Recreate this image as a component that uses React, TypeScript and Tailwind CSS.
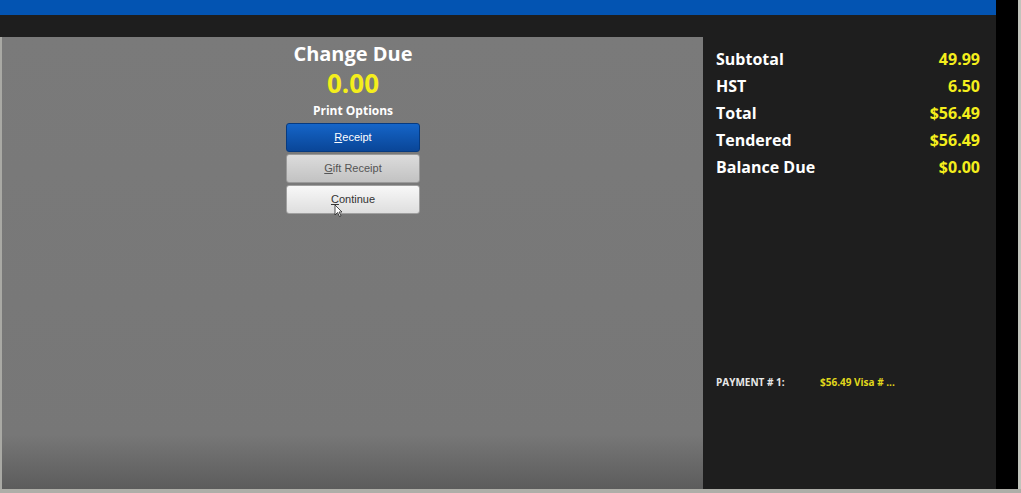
import React from "react";

const totals = [
  { label: "Subtotal", value: "49.99" },
  { label: "HST", value: "6.50" },
  { label: "Total", value: "$56.49" },
  { label: "Tendered", value: "$56.49" },
  { label: "Balance Due", value: "$0.00" },
];

function PosButton({ first, rest, variant }: { first: string; rest: string; variant: "blue" | "gray" | "white" }) {
  const styles = {
    blue: "bg-gradient-to-b from-[#1565c8] to-[#0a4698] border-[#063a80] text-white",
    gray: "bg-gradient-to-b from-[#dcdcdc] to-[#c2c2c2] border-[#9a9a9a] text-[#555]",
    white: "bg-gradient-to-b from-[#f8f8f8] to-[#dedede] border-[#a0a0a0] text-[#333]",
  }[variant];
  return (
    <button className={`w-[134px] h-[29px] rounded-[3px] border flex items-center justify-center text-[11px] ${styles}`} style={{ fontFamily: "'Liberation Sans', Arial, sans-serif" }}>
      <span className="underline">{first}</span>
      {rest}
    </button>
  );
}

export default function App() {
  return (
    <div className="w-[1021px] h-[493px] bg-[#aeaea8] flex flex-col overflow-hidden" style={{ fontFamily: "'Open Sans', 'Noto Sans', sans-serif" }}>
      <div className="h-[489px] flex">
        <div className="w-[996px] bg-[#1e1e1e] flex flex-col">
          <div className="h-[15px] bg-[#0354b2]" />
          <div className="flex-1 flex pt-[22px]">
            <div className="w-[703px] border-l-2 border-[#a9a9a4] bg-[linear-gradient(to_bottom,#7a7a7a_0%,#777777_88%,#5c5c5c_100%)] flex flex-col items-center pl-[1px]">
              <div className="text-white font-bold text-[20px] leading-none mt-[7px]">Change Due</div>
              <div className="text-[#f4ee1c] font-bold text-[26px] leading-none mt-[6px]">0.00</div>
              <div className="text-white font-bold text-[12px] leading-none mt-[9px]">Print Options</div>
              <div className="flex flex-col gap-[2px] mt-[6px] relative">
                <PosButton first="R" rest="eceipt" variant="blue" />
                <PosButton first="G" rest="ift Receipt" variant="gray" />
                <PosButton first="C" rest="ontinue" variant="white" />
                <svg className="absolute left-[48px] top-[81px]" width="9" height="13" viewBox="0 0 9 13">
                  <path d="M1 1 L1 11 L3.5 8.5 L5.5 12.5 L7 11.8 L5 8 L8 8 Z" fill="#fff" stroke="#222" strokeWidth="0.8" />
                </svg>
              </div>
            </div>
            <div className="flex-1 flex flex-col pl-[13px] pr-[16px] pt-[8px]">
              {totals.map((t) => (
                <div key={t.label} className="flex justify-between h-[27px] items-center font-bold text-[16px]">
                  <span className="text-white">{t.label}</span>
                  <span className="text-[#f4ee1c]">{t.value}</span>
                </div>
              ))}
              <div className="flex mt-[195px] text-[10px] font-bold items-center">
                <span className="w-[104px] text-[#e8e8e8]">PAYMENT # 1:</span>
                <span className="text-[#e0d81c]">$56.49 Visa # ...</span>
              </div>
            </div>
          </div>
        </div>
        <div className="w-[22px] bg-black" />
        <div className="flex-1 bg-[#c2c4bc]" />
      </div>
    </div>
  );
}
